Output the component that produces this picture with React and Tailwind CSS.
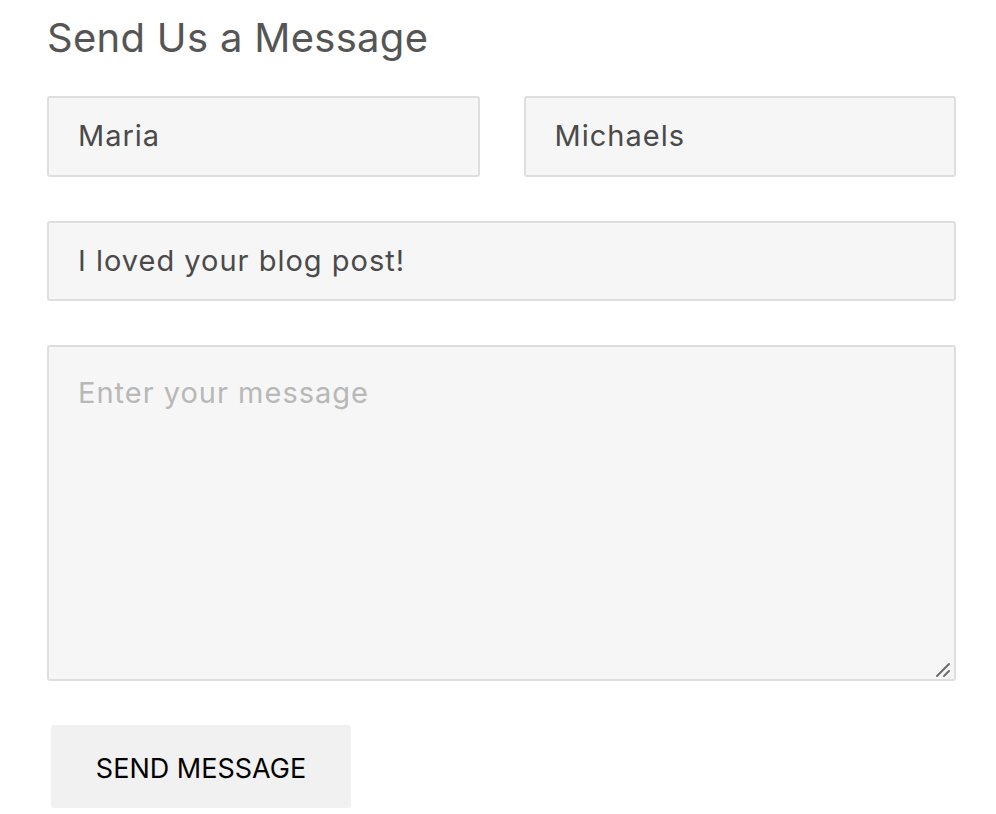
export default function App() {
  const font = { fontFamily: '"Inter", "Liberation Sans", sans-serif' };
  const field =
    "rounded-[3px] border-2 border-[#dedede] bg-[#f6f6f6] px-[29px] text-[29px] tracking-[1px] text-[#4a4a4a] outline-none";
  return (
    <div className="min-h-[814px] bg-white" style={font}>
      <div className="ml-[47px] w-[909px] pt-[14px]">
        <h2 className="text-[40px] leading-[48px] font-normal text-[#555555] tracking-[0.3px]">
          Send Us a Message
        </h2>
        <form className="mt-[34px] flex flex-col gap-[44px]" onSubmit={(e) => e.preventDefault()}>
          <div className="flex gap-[44px]">
            <input defaultValue="Maria" className={`h-[81px] flex-1 min-w-0 pb-[2px] ${field}`} />
            <input defaultValue="Michaels" className={`h-[81px] flex-1 min-w-0 pb-[2px] ${field}`} />
          </div>
          <input
            defaultValue="I loved your blog post!"
            className={`h-[80px] w-full pb-[2px] ${field}`}
          />
          <div className="relative">
            <textarea
              placeholder="Enter your message"
              className={`block h-[336px] w-full resize-none pt-[26px] leading-[40px] placeholder:text-[#b8b8b8] ${field}`}
            />
            <svg
              className="pointer-events-none absolute right-[5px] bottom-[3px]"
              width="16"
              height="16"
              viewBox="0 0 16 16"
            >
              <line x1="2" y1="14" x2="14" y2="2" stroke="#6b6b6b" strokeWidth="2" strokeLinecap="round" />
              <line x1="9" y1="14" x2="14" y2="9" stroke="#6b6b6b" strokeWidth="2" strokeLinecap="round" />
            </svg>
          </div>
        </form>
        <button
          type="button"
          className="mt-[44px] ml-[4px] h-[83px] w-[300px] rounded-[3px] bg-[#f1f1f1] pt-[5px] text-[27px] text-black uppercase"
        >
          Send Message
        </button>
      </div>
    </div>
  );
}
